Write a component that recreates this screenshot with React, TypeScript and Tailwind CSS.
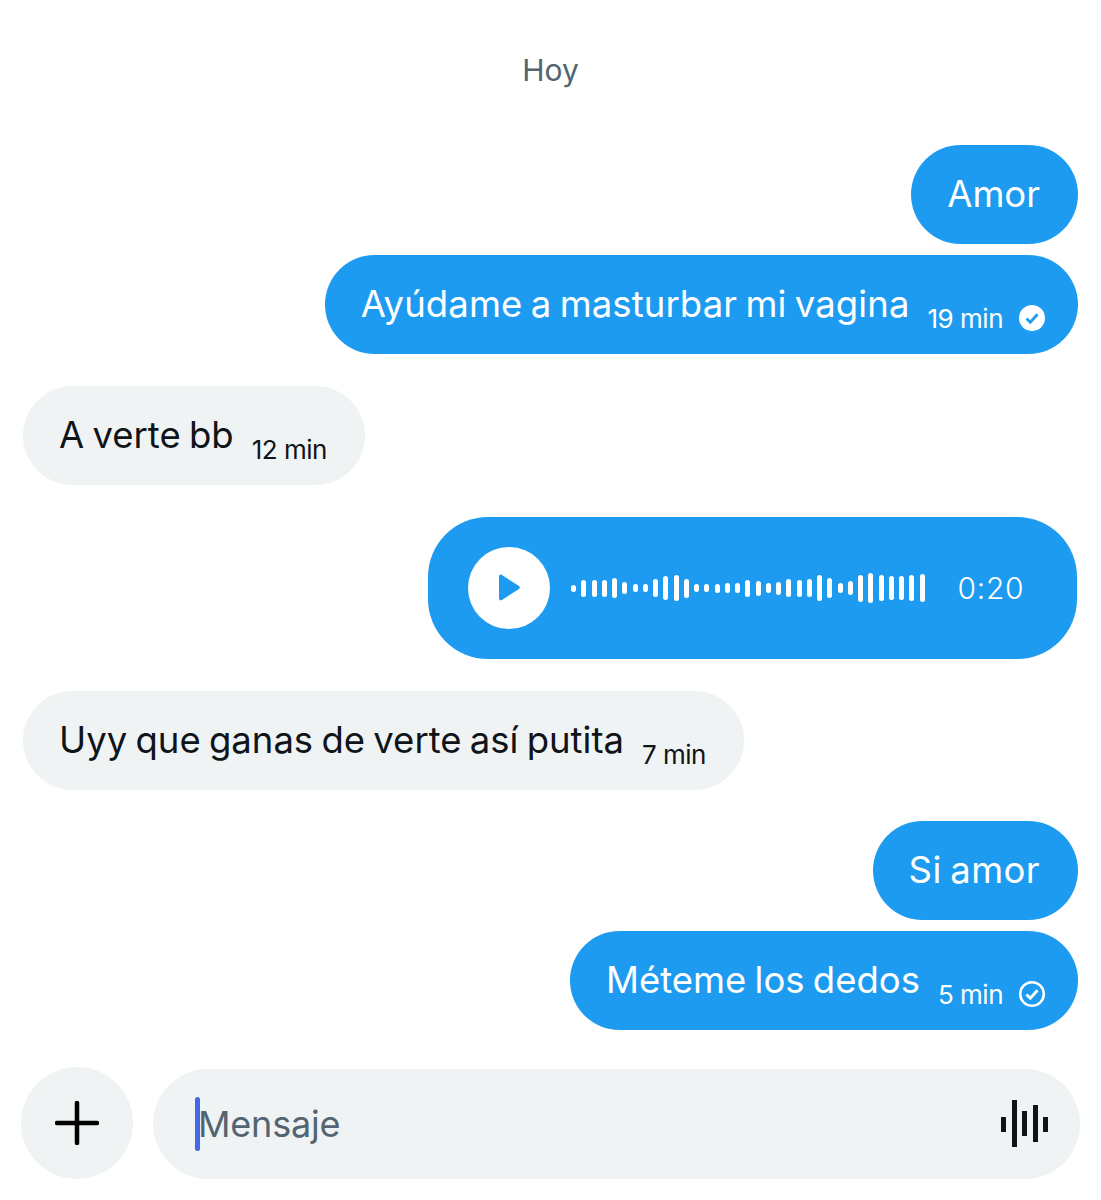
const font = "font-['Inter','Liberation_Sans',sans-serif]";

const heights = [7,17,17,17,20,12,8,8,18,24,26,19,8,8,9,10,10,17,15,10,13,18,17,18,26,20,10,14,27,30,26,24,24,26,28];

function Bubble({ mine, text, time, status, spacing = '' }: { mine?: boolean; text: string; time?: string; status?: 'read' | 'sent'; spacing?: string }) {
  return (
    <div className={`flex h-[99px] items-center rounded-full pl-[36px] ${mine ? 'self-end bg-[#1d9bf0] text-white' : 'self-start bg-[#eff3f4] text-[#0f1419]'} ${status ? 'pr-[32px]' : 'pr-[38px]'}`}>
      <span className={`mb-[1px] text-[36.5px] leading-none [word-spacing:-2px] whitespace-nowrap ${spacing}`}>{text}</span>
      {time && <span className="ml-[18px] mt-[29px] text-[26px] leading-none tracking-[-0.5px] whitespace-nowrap">{time}</span>}
      {status === 'read' && (
        <svg className="ml-[15px] mt-[26px]" width="28" height="28" viewBox="0 0 28 28">
          <circle cx="14" cy="14" r="13" fill="#fff" />
          <path d="M8.500 14.500l3.800 3.800 7.200-8" fill="none" stroke="#1d9bf0" strokeWidth="2.800" />
        </svg>
      )}
      {status === 'sent' && (
        <svg className="ml-[15px] mt-[26px]" width="28" height="28" viewBox="0 0 28 28">
          <circle cx="14" cy="14" r="11.800" fill="none" stroke="#fff" strokeWidth="2.500" />
          <path d="M8.500 14.500l3.800 3.800 7.200-8" fill="none" stroke="#fff" strokeWidth="2.800" />
        </svg>
      )}
    </div>
  );
}

export default function App() {
  return (
    <div className={`${font} flex h-[1200px] w-[1101px] flex-col overflow-hidden bg-white`}>
      <div className="flex h-[145px] justify-center pt-[52px]">
        <span className="text-[30px] leading-[36px] text-[#536471]">Hoy</span>
      </div>
      <div className="flex flex-col pl-[23px] pr-[23px]">
        <Bubble mine text="Amor" />
        <div className="h-[11px]" />
        <Bubble mine text="Ayúdame a masturbar mi vagina" time="19 min" status="read" spacing="tracking-[0.1px]" />
        <div className="h-[32px]" />
        <Bubble text="A verte bb" time="12 min" />
        <div className="h-[32px]" />
        <div className="mr-[1px] flex h-[142px] w-[649px] items-center self-end rounded-[60px] bg-[#1d9bf0] pl-[40px] text-white">
          <div className="flex h-[82px] w-[82px] items-center justify-center rounded-full bg-white">
            <svg width="28" height="30" viewBox="0 0 28 30">
              <path d="M4 4.500c0-1.600 1.800-2.500 3-1.500l17 11c1 .7 1 2.300 0 3L7 28c-1.300 .9-3 0-3-1.500z" fill="#1d9bf0" transform="translate(0 -1)" />
            </svg>
          </div>
          <div className="ml-[21px] flex items-center gap-[5.250px]">
            {heights.map((h, i) => (
              <div key={i} className="w-[5px] rounded-full bg-white" style={{ height: h }} />
            ))}
          </div>
          <span className="ml-[33px] text-[30px] leading-none font-light tracking-[0.7px]">0:20</span>
        </div>
        <div className="h-[32px]" />
        <Bubble text="Uyy que ganas de verte así putita" time="7 min" />
        <div className="h-[31px]" />
        <Bubble mine text="Si amor" spacing="tracking-[0.4px]" />
        <div className="h-[11px]" />
        <Bubble mine text="Méteme los dedos" time="5 min" status="sent" />
      </div>
      <div className="mt-[37px] flex pl-[21px]">
        <div className="flex h-[112px] w-[112px] items-center justify-center rounded-full bg-[#eff3f4]">
          <svg width="44" height="44" viewBox="0 0 44 44">
            <path d="M22 2v40M2 22h40" stroke="#000" strokeWidth="4.500" strokeLinecap="round" />
          </svg>
        </div>
        <div className="ml-[20px] flex h-[110px] w-[927px] items-center self-end rounded-full bg-[#eff3f4] pl-[42px] pr-[31px]">
          <div className="relative z-10 h-[54px] w-[5px] rounded-full bg-[#4169e8]" />
          <span className="-ml-[2px] flex-1 text-[36px] leading-none tracking-[-0.2px] text-[#536471]">Mensaje</span>
          <svg width="48" height="48" viewBox="0 0 48 48" fill="#0f1419">
            <rect x="0" y="17" width="5" height="15" />
            <rect x="11" y="0" width="5" height="47" />
            <rect x="21" y="11" width="5" height="25" />
            <rect x="32" y="5" width="5" height="37" />
            <rect x="42" y="17" width="5" height="15" />
          </svg>
        </div>
      </div>
    </div>
  );
}
